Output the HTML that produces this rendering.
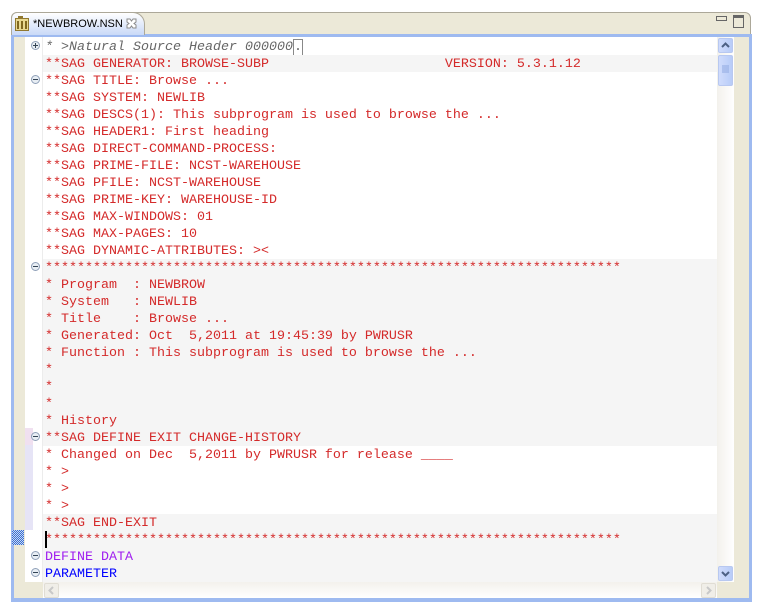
<!DOCTYPE html>
<html><head><style>
body{margin:0;width:762px;height:612px;background:#fff;position:relative;overflow:hidden;font-family:"Liberation Sans",sans-serif}
.win{position:absolute;left:11px;top:12px;width:740px;height:590px;background:#ece9d8;border:1px solid #aca899;border-radius:6px 6px 0 0;box-sizing:border-box}
.tab{position:absolute;left:11px;top:12px;width:134px;height:23px;background:linear-gradient(#fff,#c9d9f7);border:1px solid #aca899;border-bottom:none;border-radius:6px 12px 0 0;box-sizing:border-box;font-size:11px;color:#000}
.tab span{position:absolute;left:21px;top:5px}
.frame{position:absolute;left:11px;top:34px;width:741px;height:568px;background:#9ebaf0}
.ruler{position:absolute;left:14px;top:37px;width:11px;height:561px;background:#ece9d8}
.gut{position:absolute;left:25px;top:37px;width:17px;height:545px;background:#fff}
.sep{position:absolute;left:42px;top:37px;width:1px;height:545px;background:#ececec}
.txt{position:absolute;left:43px;top:37px;width:674px;height:545px;background:#fff;overflow:hidden}
.ln{position:absolute;left:0;width:674px;height:17px;font:13.33px/17px "Liberation Mono",monospace;color:#d42a2a;white-space:pre;padding-left:2px;padding-top:1px;box-sizing:border-box}
.g{background:#f5f5f5}
.vs{position:absolute;left:717px;top:37px;width:17px;height:545px;background:linear-gradient(90deg,#f3f1ec,#fff)}
.rb{position:absolute;left:734px;top:37px;width:15px;height:561px;background:#ece9d8}
.hs{position:absolute;left:43px;top:582px;width:674px;height:16px;background:linear-gradient(#f3f1ec,#fff)}
.hl{position:absolute;left:14px;top:582px;width:29px;height:16px;background:#ece9d8}
.corner{position:absolute;left:717px;top:582px;width:17px;height:16px;background:#ece9d8}
.btn{position:absolute;width:15px;height:15px;border:1px solid #b8c8f0;border-radius:2px;background:linear-gradient(90deg,#d0dcfc,#b8ccf8);box-sizing:border-box}
.fold{position:absolute;left:31px;width:9px;height:9px;border:1px solid #8fa0b8;border-radius:50%;background:#e8eef4;box-sizing:border-box}
.fold:after{content:"";position:absolute;left:1px;top:3px;width:5px;height:1px;background:#345}
.plus:before{content:"";position:absolute;left:3px;top:1px;width:1px;height:5px;background:#345}
</style></head><body>
<div class="win"></div>
<div class="frame"></div>
<div class="tab"><svg style="position:absolute;left:3px;top:3px" width="15" height="16"><rect x="0.5" y="2.5" width="13" height="12" fill="#e8d890" stroke="#907830"/><rect x="3" y="0" width="5" height="3" fill="#907830"/><rect x="2" y="5" width="2" height="8" fill="#806820"/><rect x="6" y="5" width="2" height="8" fill="#806820"/><rect x="10" y="5" width="2" height="8" fill="#806820"/></svg><span>*NEWBROW.NSN</span><svg style="position:absolute;left:114px;top:5px" width="11" height="11"><path d="M1 1h3l1.5 2 1.5-2h3v3l-2 1.5 2 1.5v3h-3L5.5 8 4 10H1V7l2-1.5L1 4z" fill="#fff" stroke="#8a8a8a"/></svg></div>
<div style="position:absolute;left:716px;top:16px;width:9px;height:3px;border:1px solid #666"></div>
<div style="position:absolute;left:733px;top:15px;width:9px;height:9px;border:1px solid #666;border-top-width:3px"></div>
<div class="ruler"></div><div class="gut"></div><div class="sep"></div>
<div style="position:absolute;left:25px;top:428px;width:8px;height:17px;background:#f0e0f0"></div>
<div style="position:absolute;left:25px;top:445px;width:8px;height:85px;background:#e6e4f6"></div>
<div style="position:absolute;left:12px;top:530px;width:12px;height:15px;background:repeating-conic-gradient(#3a6fd0 0 25%,#c8d8f4 0 50%) 0 0/2px 2px"></div>
<div class="txt">
<div class="ln" style="top:1px;color:#666;font-style:italic">* &gt;Natural Source Header 000000<span style="border:1px solid #888;font-style:normal">.</span></div>
<div class="ln g" style="top:18px">**SAG GENERATOR: BROWSE-SUBP                      VERSION: 5.3.1.12</div>
<div class="ln" style="top:35px">**SAG TITLE: Browse ...</div>
<div class="ln" style="top:52px">**SAG SYSTEM: NEWLIB</div>
<div class="ln" style="top:69px">**SAG DESCS(1): This subprogram is used to browse the ...</div>
<div class="ln" style="top:86px">**SAG HEADER1: First heading</div>
<div class="ln" style="top:103px">**SAG DIRECT-COMMAND-PROCESS:</div>
<div class="ln" style="top:120px">**SAG PRIME-FILE: NCST-WAREHOUSE</div>
<div class="ln" style="top:137px">**SAG PFILE: NCST-WAREHOUSE</div>
<div class="ln" style="top:154px">**SAG PRIME-KEY: WAREHOUSE-ID</div>
<div class="ln" style="top:171px">**SAG MAX-WINDOWS: 01</div>
<div class="ln" style="top:188px">**SAG MAX-PAGES: 10</div>
<div class="ln" style="top:205px">**SAG DYNAMIC-ATTRIBUTES: &gt;&lt;</div>
<div class="ln g" style="top:222px">************************************************************************</div>
<div class="ln g" style="top:239px">* Program  : NEWBROW</div>
<div class="ln g" style="top:256px">* System   : NEWLIB</div>
<div class="ln g" style="top:273px">* Title    : Browse ...</div>
<div class="ln g" style="top:290px">* Generated: Oct  5,2011 at 19:45:39 by PWRUSR</div>
<div class="ln g" style="top:307px">* Function : This subprogram is used to browse the ...</div>
<div class="ln g" style="top:324px">*</div>
<div class="ln g" style="top:341px">*</div>
<div class="ln g" style="top:358px">*</div>
<div class="ln g" style="top:375px">* History</div>
<div class="ln g" style="top:392px">**SAG DEFINE EXIT CHANGE-HISTORY</div>
<div class="ln" style="top:409px">* Changed on Dec  5,2011 by PWRUSR for release ____</div>
<div class="ln" style="top:426px">* &gt;</div>
<div class="ln" style="top:443px">* &gt;</div>
<div class="ln" style="top:460px">* &gt;</div>
<div class="ln g" style="top:477px">**SAG END-EXIT</div>
<div class="ln g" style="top:494px"><span style="position:absolute;left:2px;top:0;width:2px;height:17px;background:#000"></span>************************************************************************</div>
<div class="ln g" style="top:511px;color:#a020f0">DEFINE DATA</div>
<div class="ln g" style="top:528px;color:#0000ff">PARAMETER</div>
</div>
<div class="fold plus" style="top:41px"></div>
<div class="fold" style="top:75px"></div>
<div class="fold" style="top:262px"></div>
<div class="fold" style="top:432px"></div>
<div class="fold" style="top:551px"></div>
<div class="fold" style="top:568px"></div>
<div class="vs"></div><div class="rb"></div>
<div class="btn" style="left:718px;top:38px"><svg width="13" height="13"><path d="M3 8L6.5 4.5L10 8" stroke="#4d6185" stroke-width="2" fill="none"/></svg></div>
<div class="btn" style="left:718px;top:55px;height:31px"><svg width="13" height="29"><path d="M3 10h7M3 12h7M3 14h7M3 16h7" stroke="#8fa8e0"/></svg></div>
<div class="btn" style="left:718px;top:566px"><svg width="13" height="13"><path d="M3 5L6.5 8.5L10 5" stroke="#4d6185" stroke-width="2" fill="none"/></svg></div>
<div class="hs"></div><div class="hl"></div><div class="corner"></div>
<div class="btn" style="left:44px;top:583px;background:#f0eee8;border-color:#e0ddd4"><svg width="13" height="13"><path d="M8 3L4.5 6.5L8 10" stroke="#c8c8c8" stroke-width="2" fill="none"/></svg></div>
<div class="btn" style="left:701px;top:583px;background:#f0eee8;border-color:#e0ddd4"><svg width="13" height="13"><path d="M5 3L8.5 6.5L5 10" stroke="#c8c8c8" stroke-width="2" fill="none"/></svg></div>
</body></html>
